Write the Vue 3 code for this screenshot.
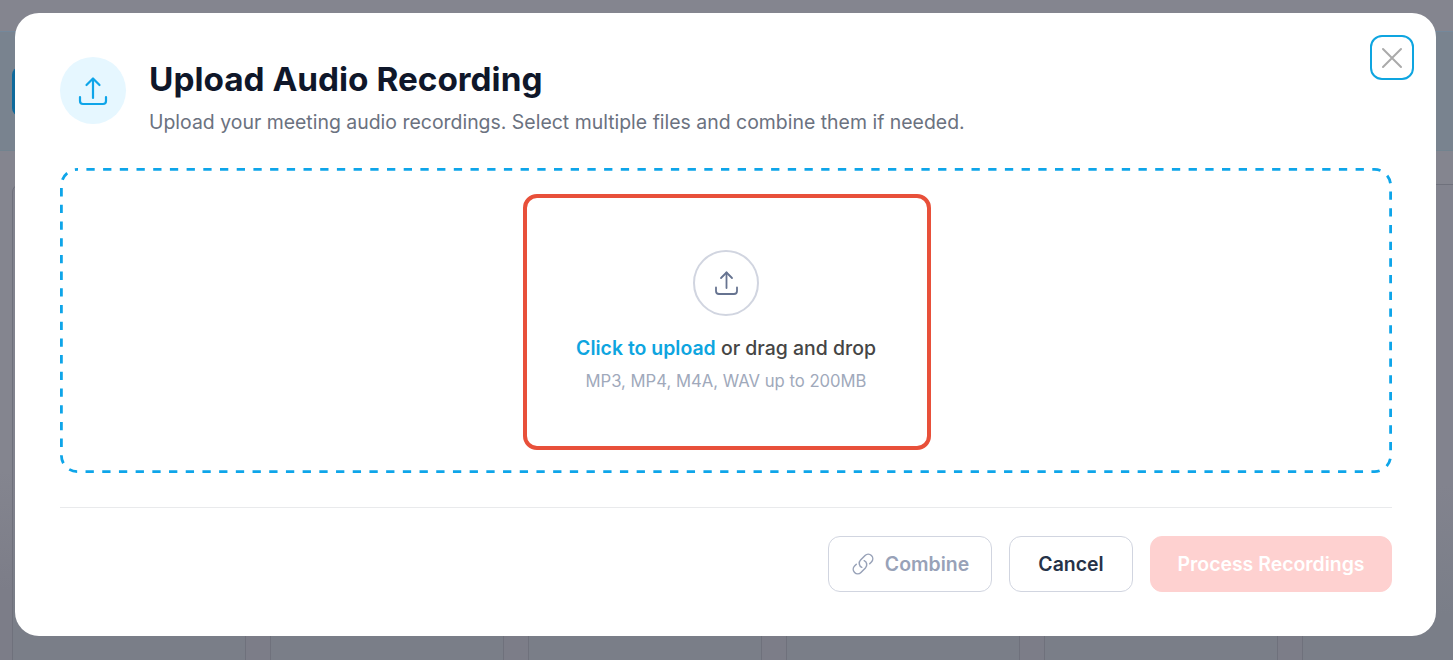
<script setup>
const columns = [1, 2, 3, 4, 5, 6]
</script>

<template>
  <div class="page">
    <div class="top-strip"></div>
    <div class="band">
      <div class="band-button"></div>
    </div>
    <div class="board">
      <div v-for="c in columns" :key="c" class="column"></div>
    </div>
    <div class="overlay">
      <section class="modal">
        <button class="close" type="button" aria-label="Close">
          <svg width="24" height="24" viewBox="0 0 24 24" fill="none" stroke="#aaaaaa" stroke-width="2" stroke-linecap="round">
            <path d="M3 3l18 18M21 3L3 21" />
          </svg>
        </button>
        <header class="head">
          <div class="head-icon">
            <svg width="34" height="34" viewBox="0 0 34 34" fill="none" stroke="#0ea5e9" stroke-width="2.200" stroke-linecap="round" stroke-linejoin="round">
              <path d="M17 24V5" />
              <path d="M10.500 11L17 4.500 23.500 11" />
              <path d="M4 23v4a3 3 0 0 0 3 3h20a3 3 0 0 0 3-3v-4" />
            </svg>
          </div>
          <div class="head-text">
            <h1>Upload Audio Recording</h1>
            <p>Upload your meeting audio recordings. Select multiple files and combine them if needed.</p>
          </div>
        </header>
        <div class="drop">
          <svg class="dash" width="1332" height="305" viewBox="0 0 1332 305" fill="none">
            <rect x="1.400" y="1.400" width="1329.200" height="302.200" rx="16" stroke="#0ea5e9" stroke-width="2.800" stroke-dasharray="8.300 8.400" stroke-dashoffset="7.700" />
          </svg>
          <div class="target">
            <div class="target-icon">
              <svg width="24" height="24" viewBox="0 0 24 24" fill="none" stroke="#667390" stroke-width="1.800" stroke-linecap="round" stroke-linejoin="round">
                <path d="M12.500 17V1.500" />
                <path d="M7 7l5.500-5.500L18 7" />
                <path d="M2 16.500V20a3 3 0 0 0 3 3h15a3 3 0 0 0 3-3v-3.500" />
              </svg>
            </div>
            <div class="target-line"><span class="link">Click to upload</span> or drag and drop</div>
            <div class="target-hint">MP3, MP4, M4A, WAV up to 200MB</div>
          </div>
        </div>
        <footer class="foot">
          <button class="btn combine" type="button">
            <svg width="24" height="24" viewBox="0 0 24 24" fill="none" stroke="#98a2b8" stroke-width="1.500" stroke-linecap="round" stroke-linejoin="round">
              <path d="M13.190 8.688a4.500 4.500 0 0 1 1.242 7.244l-4.500 4.500a4.500 4.500 0 0 1-6.364-6.364l1.757-1.757m13.350-.622 1.757-1.757a4.500 4.500 0 0 0-6.364-6.364l-4.500 4.500a4.500 4.500 0 0 0 1.242 7.244" />
            </svg>
            Combine
          </button>
          <button class="btn cancel" type="button">Cancel</button>
          <button class="btn process" type="button">Process Recordings</button>
        </footer>
      </section>
    </div>
  </div>
</template>

<style>
html, body { margin: 0; height: 100%; overflow: hidden; }
</style>

<style scoped>
.page {
  position: relative;
  width: 1453px;
  height: 660px;
  overflow: hidden;
  background: #84858f;
  font-family: Inter, "Liberation Sans", sans-serif;
}
.top-strip { height: 31px; }
.band {
  padding: 35px 12px 0;
  height: 83px;
  background: #79838f;
  border-top: 1px solid #74889b;
  border-bottom: 1px solid #72838f;
}
.band-button {
  width: 120px;
  height: 49px;
  border-radius: 8px;
  background: #0e6a9c;
}
.board {
  display: flex;
  gap: 24px;
  padding: 33px 0 0 12px;
  height: 500px;
  background: linear-gradient(#84858f 0, #84858f 320px, #7c7d88 440px);
}
.column {
  flex: 0 0 234px;
  box-sizing: border-box;
  border: 1px solid #6f717c;
  border-radius: 8px;
  background: linear-gradient(#82838e 0, #82838e 300px, #7a7e88 430px);
}
.overlay {
  position: absolute;
  inset: 0;
  display: flex;
  align-items: flex-start;
  padding: 13px 17px 0 15px;
}
.modal {
  position: relative;
  flex: 1;
  box-sizing: border-box;
  height: 623px;
  padding: 44px 44px 0 45px;
  border-radius: 24px;
  background: #fff;
}
.close {
  position: absolute;
  top: 22px;
  right: 22px;
  display: flex;
  align-items: center;
  justify-content: center;
  width: 44px;
  height: 45px;
  padding: 0;
  background: #fff;
  border: 2.500px solid #0ea5e0;
  border-radius: 12px;
}
.head {
  display: flex;
  gap: 23px;
  height: 111px;
}
.head-icon {
  display: flex;
  align-items: center;
  justify-content: center;
  width: 66px;
  height: 67px;
  border-radius: 50%;
  background: #e6f7ff;
}
h1 {
  margin: 0;
  font-size: 33.330px;
  line-height: 44px;
  font-weight: 700;
  color: #0f172a;
}
.head-text p {
  margin: 8px 0 0;
  font-size: 19.440px;
  line-height: 26px;
  color: #6b7280;
}
.drop {
  position: relative;
  display: flex;
  justify-content: center;
  box-sizing: border-box;
  height: 305px;
  padding-top: 26px;
}
.dash {
  position: absolute;
  top: 0;
  left: 0;
}
.target {
  display: flex;
  flex-direction: column;
  align-items: center;
  box-sizing: border-box;
  width: 408px;
  height: 256px;
  margin-left: 2px;
  padding: 52px 2px 0 0;
  border: 4px solid #e8503a;
  border-radius: 14px;
}
.target-icon {
  display: flex;
  align-items: center;
  justify-content: center;
  box-sizing: border-box;
  width: 66px;
  height: 66px;
  border: 2.500px solid #d1d5e0;
  border-radius: 50%;
}
.target-line {
  margin-top: 19px;
  font-size: 19.440px;
  line-height: 26px;
  font-weight: 500;
  color: #454545;
}
.link { color: #0ea5e0; font-weight: 600; }
.target-hint {
  margin-top: 9px;
  font-size: 16.670px;
  line-height: 22px;
  color: #a0a9bb;
}
.foot {
  display: flex;
  justify-content: flex-end;
  gap: 17px;
  margin-top: 34px;
  padding-top: 28px;
  border-top: 1px solid #e9eaec;
}
.btn {
  display: flex;
  align-items: center;
  justify-content: center;
  box-sizing: border-box;
  height: 56px;
  font-family: inherit;
  font-size: 19.440px;
  font-weight: 600;
  border-radius: 12px;
  background: #fff;
  border: 1.400px solid #d1d5e0;
}
.combine { gap: 10px; width: 164px; color: #98a2b8; }
.cancel { width: 124px; color: #263248; }
.process { width: 242px; color: #fff; background: #fed1d0; border-color: #fed1d0; }
</style>
